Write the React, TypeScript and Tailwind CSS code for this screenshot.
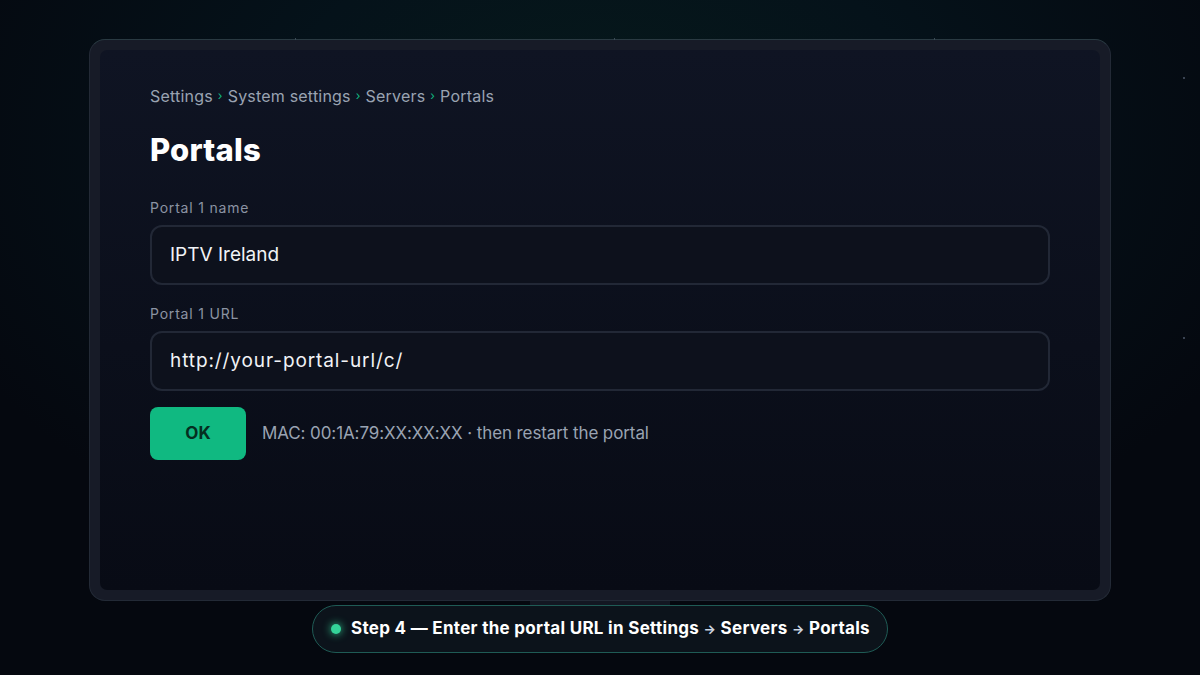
import React from "react";

const font = { fontFamily: "Inter, 'Noto Sans', sans-serif" };

function Sep() {
  return <span className="mx-[5px] text-[12px] text-[#10b981]">›</span>;
}

export default function App() {
  return (
    <div
      className="relative w-[1200px] h-[675px] overflow-hidden bg-[#05080e] bg-[radial-gradient(ellipse_60%_70%_at_50%_20%,#061a1b_0%,#05121a_45%,#05080f_100%)]"
      style={font}
    >
      {/* decorative dots */}
      <div className="absolute left-[1183px] top-[77px] w-[2px] h-[2px] bg-[#3a4352]" />
      <div className="absolute left-[1183px] top-[337px] w-[2px] h-[2px] bg-[#3a4352]" />

      <div className="flex flex-col items-center pt-[39px]">
        {/* TV frame */}
        <div className="relative w-[1022px] h-[562px] rounded-[16px] bg-[#171b27] border border-[#232a36] border-t-[#2a3a42] p-[10px]">
          <div className="absolute left-[205px] top-[-2px] w-[1px] h-[2px] bg-[#3a4a55]" />
          <div className="absolute left-[524px] top-[-2px] w-[1px] h-[2px] bg-[#3a4a55]" />
          <div className="absolute left-[844px] top-[-2px] w-[1px] h-[2px] bg-[#3a4a55]" />
          <div className="w-full h-full rounded-[7px] bg-[linear-gradient(180deg,#0f1423_0%,#0b0f1b_55%,#080b15_100%)] pl-[50px] pr-[50px] pt-[34px]">
            <div className="flex items-center text-[16px] leading-[24px] text-[#9aa3b2] tracking-[0.2px]">
              <span>Settings</span>
              <Sep />
              <span>System settings</span>
              <Sep />
              <span>Servers</span>
              <Sep />
              <span>Portals</span>
            </div>
            <h1 className="mt-[24px] text-[31px] leading-[36px] font-extrabold text-white tracking-[0.2px]">
              Portals
            </h1>
            <div className="mt-[30px] text-[14px] leading-[20px] text-[#8b93a3] tracking-[0.8px]">Portal 1 name</div>
            <div className="mt-[7px] h-[60px] w-[900px] rounded-[12px] border-2 border-[#222836] bg-[#0d111c] flex items-center px-[18px] text-[19px] text-[#f1f3f6]">
              IPTV Ireland
            </div>
            <div className="mt-[19px] text-[14px] leading-[20px] text-[#8b93a3] tracking-[0.8px]">Portal 1 URL</div>
            <div className="mt-[7px] h-[60px] w-[900px] rounded-[12px] border-2 border-[#222836] bg-[#0d111c] flex items-center px-[18px] text-[19px] text-[#f1f3f6] tracking-[0.9px]">
              http://your-portal-url/c/
            </div>
            <div className="mt-[16px] flex items-center gap-[16px]">
              <div className="w-[96px] h-[53px] rounded-[8px] bg-[#10b981] flex items-center justify-center text-[17px] font-bold text-[#052e20]">
                OK
              </div>
              <div className="text-[17px] text-[#9aa3b2] tracking-[-0.1px]">MAC: 00:1A:79:XX:XX:XX · then restart the portal</div>
            </div>
          </div>
        </div>
        {/* stand */}
        <div className="w-[140px] h-[6px] bg-[#131722]" />
      </div>

      {/* caption pill */}
      <div className="absolute left-[312px] top-[605px] w-[576px] h-[48px] rounded-full border border-[#1f5b55] bg-[#0c131b] flex items-center pl-[18px]">
        <div className="w-[10px] h-[10px] rounded-full bg-[#34d399] shadow-[0_0_8px_#34d399]" />
        <div className="ml-[10px] text-[17px] font-bold text-white tracking-[0.3px]">
          Step 4 — Enter the portal URL in Settings <span className="text-[13px] text-[#cbd5e1]">→</span> Servers{" "}
          <span className="text-[13px] text-[#cbd5e1]">→</span> Portals
        </div>
      </div>
    </div>
  );
}
